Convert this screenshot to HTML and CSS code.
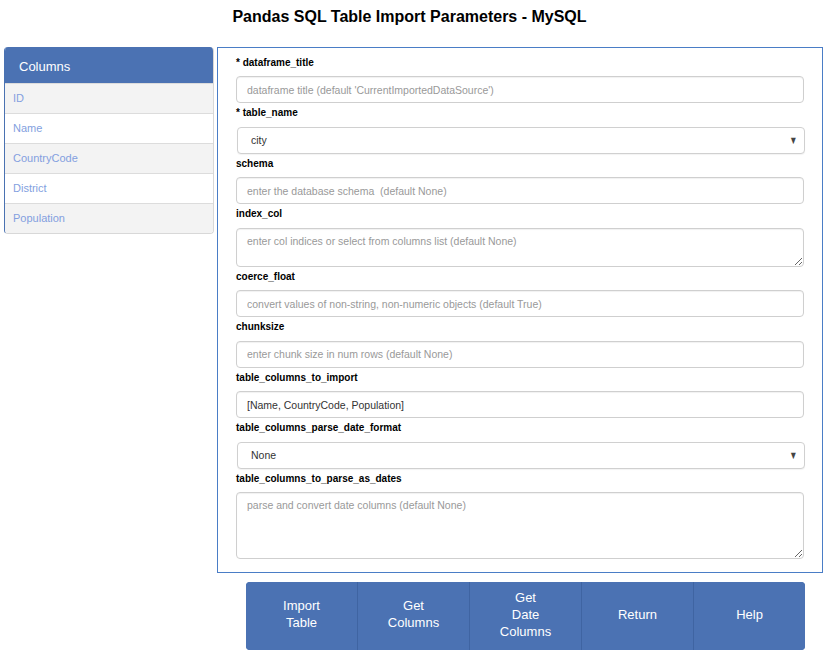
FILE: index.html
```html
<!DOCTYPE html>
<html lang="en">
<head>
<meta charset="utf-8">
<title>Pandas SQL Table Import Parameters - MySQL</title>
<link rel="stylesheet" href="styles.css">
</head>
<body>
  <h1 class="title">Pandas SQL Table Import Parameters - MySQL</h1>
  <div class="layout">
    <aside class="columns-panel">
      <div class="columns-header">Columns</div>
      <ul class="columns-list">
        <li class="col-item alt">ID</li>
        <li class="col-item">Name</li>
        <li class="col-item alt">CountryCode</li>
        <li class="col-item">District</li>
        <li class="col-item alt">Population</li>
      </ul>
    </aside>
    <div class="main">
      <form class="params">
        <label class="field-label">* dataframe_title</label>
        <input class="field-input" type="text" placeholder="dataframe title (default 'CurrentImportedDataSource')">

        <label class="field-label">* table_name</label>
        <div class="field-select"><span>city</span><span class="arrow">&#9660;</span></div>

        <label class="field-label">schema</label>
        <input class="field-input" type="text" placeholder="enter the database schema  (default None)">

        <label class="field-label">index_col</label>
        <textarea class="field-area short" placeholder="enter col indices or select from columns list (default None)"></textarea>

        <label class="field-label">coerce_float</label>
        <input class="field-input" type="text" placeholder="convert values of non-string, non-numeric objects (default True)">

        <label class="field-label">chunksize</label>
        <input class="field-input" type="text" placeholder="enter chunk size in num rows (default None)">

        <label class="field-label">table_columns_to_import</label>
        <input class="field-input" type="text" value="[Name, CountryCode, Population]">

        <label class="field-label">table_columns_parse_date_format</label>
        <div class="field-select"><span>None</span><span class="arrow">&#9660;</span></div>

        <label class="field-label">table_columns_to_parse_as_dates</label>
        <textarea class="field-area tall" placeholder="parse and convert date columns (default None)"></textarea>
      </form>
      <div class="actions">
        <button class="action" type="button">Import<br>Table</button>
        <button class="action" type="button">Get<br>Columns</button>
        <button class="action" type="button">Get<br>Date<br>Columns</button>
        <button class="action" type="button">Return</button>
        <button class="action" type="button">Help</button>
      </div>
    </div>
  </div>
</body>
</html>
```
FILE: styles.css
```css
* { box-sizing: border-box; }

body {
  margin: 0;
  font-family: "Liberation Sans", Arial, Helvetica, sans-serif;
  color: #000;
  background: #fff;
}

.title {
  margin: 8px 0 21px 0;
  padding-right: 14px;
  font-size: 16px;
  line-height: 18px;
  font-weight: bold;
  text-align: center;
}

.layout {
  display: flex;
  align-items: flex-start;
  gap: 3px;
  padding-left: 4px;
}

.columns-panel {
  width: 210px;
  border: 1px solid #d8d8d8;
  border-left: 1px solid #4a72b2;
  border-top: none;
  border-radius: 4px;
  overflow: hidden;
  background: #fff;
}

.columns-header {
  height: 36px;
  line-height: 33px;
  padding: 3px 0 0 14px;
  background: #4b72b3;
  color: #fff;
  font-size: 13px;
}

.columns-list {
  list-style: none;
  margin: 0;
  padding: 0;
}

.col-item {
  height: 30px;
  line-height: 29px;
  border-top: 1px solid #dcdcdc;
  padding-left: 8px;
  font-size: 11px;
  color: #839fe0;
  background: #fff;
}

.col-item.alt { background: #f3f3f3; }

.main {
  width: 606px;
}

.params {
  display: flex;
  flex-direction: column;
  border: 1px solid #4a7dc6;
  padding: 4.5px 18px 13px 18px;
}

.field-label {
  display: block;
  margin: 3px 0 6.5px 0;
  font-size: 10px;
  line-height: 14px;
  font-weight: bold;
  color: #000;
}

.field-input,
.field-area {
  display: block;
  width: 568px;
  margin: 0;
  border: 1px solid #cfcfcf;
  border-radius: 4px;
  box-shadow: inset 0 1px 1px rgba(0, 0, 0, 0.06);
  font-family: "Liberation Sans", Arial, Helvetica, sans-serif;
  font-size: 10.5px;
  color: #333;
  background: #fff;
}

.field-input {
  height: 27px;
  padding: 0 10px;
}

.field-area {
  padding: 6px 10px;
  resize: vertical;
}

.field-area.short { height: 39px; }
.field-area.tall { height: 67px; }

.field-input::placeholder,
.field-area::placeholder {
  color: #999;
  opacity: 1;
}

.field-select {
  display: flex;
  align-items: center;
  justify-content: space-between;
  width: 568px;
  height: 27px;
  margin-left: 1px;
  padding: 0 5px 0 13px;
  border: 1px solid #d0d0d0;
  border-radius: 4px;
  box-shadow: 0 1px 1px rgba(0, 0, 0, 0.05);
  font-size: 10.5px;
  color: #333;
  background: #fff;
}

.field-select .arrow {
  font-size: 11px;
  color: #444;
  transform: scaleX(0.75);
}

.actions {
  display: flex;
  margin: 9px 0 0 29px;
  width: 559px;
  height: 68px;
  border-radius: 4px;
  overflow: hidden;
  background: #4b72b3;
}

.action {
  flex: 1 1 0;
  margin: 0;
  border: none;
  border-left: 1px solid #3f64a2;
  background: #4b72b3;
  color: #fff;
  font-family: "Liberation Sans", Arial, Helvetica, sans-serif;
  font-size: 13px;
  line-height: 17px;
  text-align: center;
  padding: 0 0 4px 0;
}

.action:first-child { border-left: none; }
```
